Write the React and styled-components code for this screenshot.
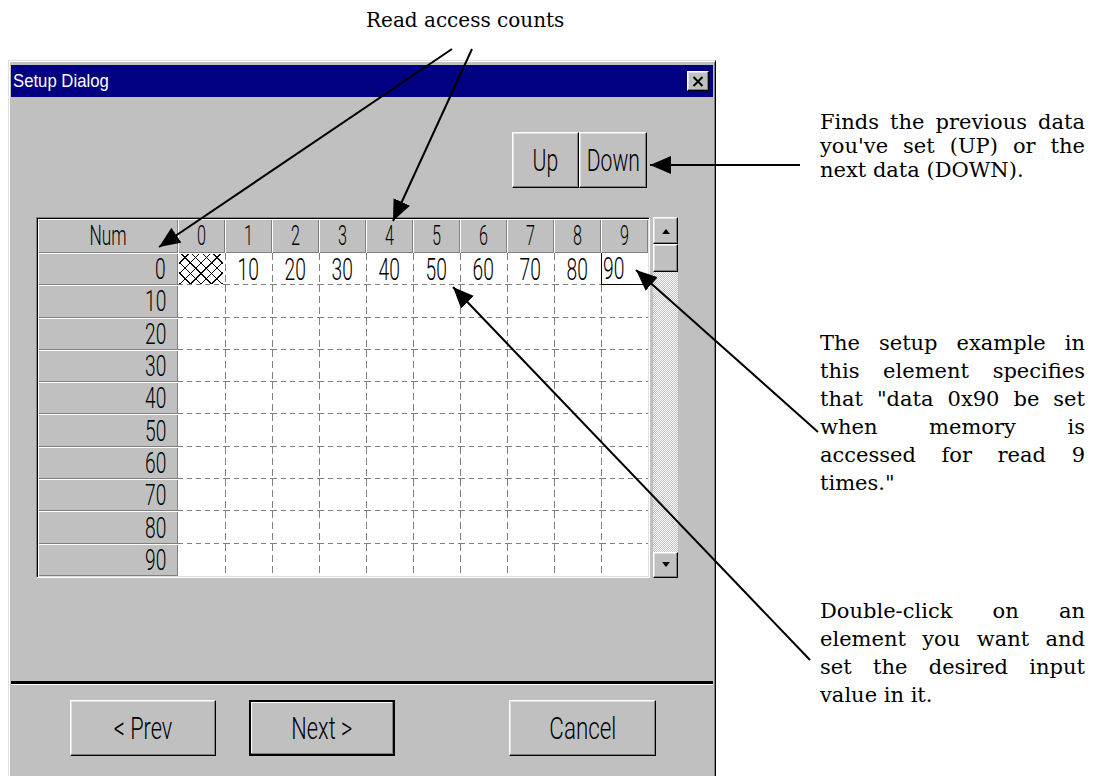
import React from 'react';
import styled, { createGlobalStyle, css } from 'styled-components';

const Global = createGlobalStyle`
  html, body { margin: 0; padding: 0; background: #fff; }
  body { width: 1093px; height: 776px; overflow: hidden; }
`;

const Page = styled.div`
  position: relative;
  width: 1093px;
  height: 776px;
  overflow: hidden;
  background: #fff;
  display: grid;
  grid-template-columns: 716px 1fr;
  grid-template-rows: 60px 1fr;
`;

const Caption = styled.div`
  grid-column: 1;
  grid-row: 1;
  padding: 8px 0 0 366px;
  font-family: "DejaVu Serif", serif;
  font-size: 20px;
  color: #000;
`;

const Notes = styled.div`
  grid-column: 2;
  grid-row: 1 / 3;
  padding-left: 104px;
  width: 265px;
  display: flex;
  flex-direction: column;
`;

const Note = styled.p`
  margin: ${p => p.top}px 0 0;
  font-family: "DejaVu Serif", serif;
  font-size: 21px;
  line-height: ${p => p.lh}px;
  text-align: justify;
  color: #000;
`;

const Overlay = styled.svg`
  position: absolute;
  left: 0;
  top: 0;
  pointer-events: none;
`;

/* ---- dialog ---- */

const Dialog = styled.div`
  grid-column: 1;
  grid-row: 2;
  margin-left: 8px;
  width: 708px;
  height: 740px;
  box-sizing: border-box;
  background: #c0c0c0;
  border: 1px solid;
  border-color: #dfdfdf #000 #000 #dfdfdf;
  box-shadow: inset 1px 1px #fff, inset -1px -1px #808080;
  padding: 4px 2px 0 2px;
  display: flex;
  flex-direction: column;
`;

const TitleBar = styled.div`
  height: 32px;
  background: #000080;
  display: flex;
  align-items: center;
  justify-content: space-between;
  padding: 0 4px 0 2px;
`;

const TitleText = styled.span`
  display: inline-block;
  font-family: "Liberation Sans", sans-serif;
  font-size: 19px;
  color: #fff;
  transform: scaleX(0.88);
  transform-origin: left center;
`;

const raised = css`
  background: #c0c0c0;
  border: 1px solid;
  border-color: #fff #000 #000 #fff;
  box-shadow: inset -1px -1px #808080, inset 1px 1px #dfdfdf;
`;

const CloseBox = styled.div`
  ${raised};
  width: 20px;
  height: 18px;
  display: flex;
  align-items: center;
  justify-content: center;
`;

const Cond = styled.span`
  display: inline-block;
  font-family: Roboto, "Liberation Sans", sans-serif;
  font-weight: 300;
  font-size: ${p => p.size}px;
  line-height: ${p => p.size - 4}px;
  color: #000;
  white-space: nowrap;
  transform: scaleX(${p => p.sx});
  transform-origin: ${p => p.origin || 'center'} center;
`;

const UpDownRow = styled.div`
  margin-top: 35px;
  display: flex;
  justify-content: flex-end;
  padding-right: 66px;
`;

const Button = styled.div`
  ${raised};
  box-sizing: border-box;
  width: ${p => p.w}px;
  height: 56px;
  display: flex;
  align-items: center;
  justify-content: center;
  ${p => p.def && css`
    border: 2px solid #000;
    box-shadow: inset -1px -1px #808080, inset 1px 1px #fff;
  `}
`;

const GridArea = styled.div`
  margin-top: 29px;
  padding-left: 25px;
  display: flex;
  gap: 3px;
  align-items: flex-start;
`;

const GridFrame = styled.div`
  width: 614px;
  box-sizing: border-box;
  border: 1px solid;
  border-color: #808080 #fff #fff #808080;
  box-shadow: inset 1px 1px #000, inset -1px -1px #dfdfdf;
  padding: 1px;
  background: #c0c0c0;
`;

const Table = styled.div`
  display: grid;
  grid-template-columns: 140px repeat(10, 47px);
  grid-template-rows: 34px repeat(10, 32.3px);
`;

const HeadCell = styled.div`
  background: #c0c0c0;
  box-shadow: inset 1px 1px #fff, inset -1px -1px #808080;
  display: flex;
  align-items: center;
  justify-content: ${p => (p.right ? 'flex-end' : 'center')};
  padding-right: ${p => (p.right ? 12 : 0)}px;
`;

const dashH = 'repeating-linear-gradient(to right, #808080 0 5px, transparent 5px 9px)';
const dashV = 'repeating-linear-gradient(to bottom, #808080 0 7px, transparent 7px 11px)';

const Cell = styled.div`
  position: relative;
  background-color: #fff;
  background-repeat: no-repeat;
  ${p => {
    const imgs = [];
    const sizes = [];
    const pos = [];
    if (!p.lastRow) { imgs.push(dashH); sizes.push('100% 1px'); pos.push('left bottom'); }
    if (!p.firstCol) { imgs.push(dashV); sizes.push('1px 100%'); pos.push('left top'); }
    return css`
      background-image: ${imgs.join(', ') || 'none'};
      background-size: ${sizes.join(', ') || 'auto'};
      background-position: ${pos.join(', ') || '0 0'};
    `;
  }}
  display: flex;
  align-items: center;
  justify-content: ${p => (p.edit ? 'flex-start' : 'center')};
  box-sizing: border-box;
  ${p => p.edit && css`
    border: 1px solid #000;
    border-top: none;
    border-right: none;
    background-image: none;
    padding-left: 1px;
  `}
`;

const Hatch = styled.div`
  position: absolute;
  inset: 1px 2px 1px 1px;
  background-image:
    repeating-linear-gradient(45deg, #000 0 1px, transparent 1px 7.5px),
    repeating-linear-gradient(-45deg, #000 0 1px, transparent 1px 7.5px);
`;

const ScrollBar = styled.div`
  width: 25px;
  height: 361px;
  display: flex;
  flex-direction: column;
  background: repeating-conic-gradient(#c0c0c0 0 25%, #fff 0 50%) 0 0 / 2px 2px;
`;

const ScrollBtn = styled.div`
  ${raised};
  box-sizing: border-box;
  height: ${p => p.h}px;
  flex: none;
  display: flex;
  align-items: center;
  justify-content: center;
`;

const Track = styled.div`
  flex: 1;
`;

const Separator = styled.div`
  margin-top: 103px;
  height: 3px;
  background: #000;
  border-bottom: 1px solid #fff;
`;

const BottomRow = styled.div`
  margin-top: 15px;
  padding-left: 59px;
  display: flex;
`;

const Spacer = styled.div`
  width: ${p => p.w}px;
`;

const Tri = ({ down }) => (
  <svg width="10" height="6" viewBox="0 0 10 6">
    <path d={down ? 'M1 0 H9 L5 5 Z' : 'M1 6 H9 L5 1 Z'} fill="#000" />
  </svg>
);

const cols = [0, 1, 2, 3, 4, 5, 6, 7, 8, 9];

export default function App() {
  return (
    <Page>
      <Global />
      <Caption>Read access counts</Caption>

      <Dialog>
        <TitleBar>
          <TitleText>Setup Dialog</TitleText>
          <CloseBox>
            <svg width="12" height="11" viewBox="0 0 12 11">
              <path d="M1.5 1 L10.5 10 M10.5 1 L1.5 10" stroke="#000" strokeWidth="2" />
            </svg>
          </CloseBox>
        </TitleBar>

        <UpDownRow>
          <Button w={67}><Cond size={32} sx={0.66}>Up</Cond></Button>
          <Button w={68}><Cond size={32} sx={0.66}>Down</Cond></Button>
        </UpDownRow>

        <GridArea>
          <GridFrame>
            <Table>
              <HeadCell><Cond size={27} sx={0.64}>Num</Cond></HeadCell>
              {cols.map(c => (
                <HeadCell key={'h' + c}><Cond size={27} sx={0.6}>{c}</Cond></HeadCell>
              ))}
              {cols.map(r => (
                <React.Fragment key={'r' + r}>
                  <HeadCell right><Cond size={30} sx={0.64} origin="right">{r * 10}</Cond></HeadCell>
                  {cols.map(c => {
                    const first = r === 0;
                    return (
                      <Cell key={c} firstCol={c === 0} lastRow={r === 9} edit={first && c === 9}>
                        {first && c === 0 && <Hatch />}
                        {first && c > 0 && (
                          <Cond size={31} sx={0.62} origin={c === 9 ? 'left' : 'center'}>{c * 10}</Cond>
                        )}
                      </Cell>
                    );
                  })}
                </React.Fragment>
              ))}
            </Table>
          </GridFrame>
          <ScrollBar>
            <ScrollBtn h={27}><Tri /></ScrollBtn>
            <ScrollBtn h={28} />
            <Track />
            <ScrollBtn h={26}><Tri down /></ScrollBtn>
          </ScrollBar>
        </GridArea>

        <Separator />

        <BottomRow>
          <Button w={146}><Cond size={32} sx={0.68}>&lt; Prev</Cond></Button>
          <Spacer w={33} />
          <Button w={146} def><Cond size={32} sx={0.68}>Next &gt;</Cond></Button>
          <Spacer w={114} />
          <Button w={147}><Cond size={32} sx={0.7}>Cancel</Cond></Button>
        </BottomRow>
      </Dialog>

      <Notes>
        <Note top={110} lh={24}>
          Finds the previous data you've set (UP) or the next data (DOWN).
        </Note>
        <Note top={147} lh={28}>
          The setup example in this element specifies that "data 0x90 be set when memory is accessed for read 9 times."
        </Note>
        <Note top={100} lh={28}>
          Double-click on an element you want and set the desired input value in it.
        </Note>
      </Notes>

      <Overlay width="1093" height="776" viewBox="0 0 1093 776">
        <defs>
          <marker id="ah" markerUnits="userSpaceOnUse" markerWidth="22" markerHeight="18"
            refX="21" refY="9" orient="auto">
            <path d="M0 0 L21 9 L0 18 Z" fill="#000" />
          </marker>
        </defs>
        <g stroke="#000" strokeWidth="2" fill="none">
          <line x1="452" y1="49" x2="159" y2="247" markerEnd="url(#ah)" />
          <line x1="472" y1="49" x2="393" y2="221" markerEnd="url(#ah)" />
          <line x1="800" y1="165" x2="650" y2="165" markerEnd="url(#ah)" />
          <line x1="818" y1="432" x2="636" y2="270" markerEnd="url(#ah)" />
          <line x1="810" y1="660" x2="453" y2="287" markerEnd="url(#ah)" />
        </g>
      </Overlay>
    </Page>
  );
}
